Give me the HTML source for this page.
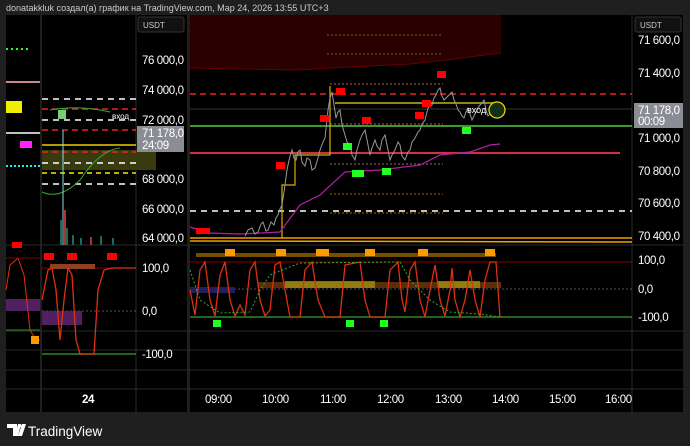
<!DOCTYPE html>
<html><head><meta charset="utf-8"><style>
*{margin:0;padding:0}
body{width:690px;height:446px;background:#1f1f1f;overflow:hidden;font-family:"Liberation Sans","Noto Sans CJK SC",sans-serif;position:relative}
.t{position:absolute;color:#ddd;white-space:nowrap}
</style></head><body>
<div class="t" style="left:6px;top:3px;font-size:9px;color:#ccc">donatakkluk создал(а) график на TradingView.com, Мар 24, 2026 13:55 UTC+3</div>
<svg width="690" height="446" style="position:absolute;left:0;top:0" font-family="Liberation Sans, sans-serif">
<rect x="6" y="15" width="34" height="397" fill="#000"/>
<rect x="42" y="15" width="145" height="397" fill="#000"/>
<rect x="190" y="15" width="493" height="397" fill="#000"/>
<g stroke="#2a2a2a" stroke-width="1">
<line x1="6" y1="245" x2="683" y2="245"/>
<line x1="6" y1="331" x2="683" y2="331"/>
<line x1="6" y1="350" x2="683" y2="350"/>
<line x1="6" y1="370" x2="683" y2="370"/>
<line x1="6" y1="389" x2="683" y2="389"/>
<line x1="136" y1="15" x2="136" y2="412"/>
<line x1="632" y1="15" x2="632" y2="412"/>
</g>
<path d="M190 15 H501 V53 L485 55 L447 60 L410 64 L350 67 L295 70 L190 68 Z" fill="#2a0000"/>
<path d="M190 68 L295 70 L350 67 L410 64 L447 60 L485 55 L501 53" stroke="#600" fill="none"/>
<line x1="327" y1="35" x2="443" y2="35" stroke="#6a6a20" stroke-dasharray="2,2"/>
<line x1="327" y1="54" x2="443" y2="54" stroke="#6a6a20" stroke-dasharray="2,2"/>
<line x1="190" y1="94" x2="632" y2="94" stroke="#e22" stroke-width="1.5" stroke-dasharray="6,4"/>
<line x1="190" y1="109" x2="632" y2="109" stroke="#333"/>
<line x1="335" y1="103" x2="500" y2="103" stroke="#8a8a10" stroke-width="2"/>
<line x1="190" y1="126" x2="632" y2="126" stroke="#3a9a30" stroke-width="2"/>
<line x1="190" y1="153" x2="620" y2="153" stroke="#d03040" stroke-width="2"/>
<line x1="190" y1="211" x2="632" y2="211" stroke="#fff" stroke-width="1.5" stroke-dasharray="6,5"/>
<line x1="330" y1="84" x2="443" y2="84" stroke="#a66" stroke-dasharray="2,2"/>
<line x1="330" y1="124" x2="443" y2="124" stroke="#a66" stroke-dasharray="2,2"/>
<line x1="330" y1="164" x2="443" y2="164" stroke="#a66" stroke-dasharray="2,2"/>
<line x1="330" y1="194" x2="443" y2="194" stroke="#a60" stroke-dasharray="2,2"/>
<line x1="330" y1="213" x2="443" y2="213" stroke="#a60" stroke-dasharray="2,2"/>
<path d="M190 238 H632 M190 241 L632 242" stroke="#f0a000" stroke-width="1.5"/>
<path d="M282 238 V185 H295 V155 H330 V86" stroke="#d8b000" fill="none" stroke-width="1.2"/>
<path d="M190 227 L210 233 L240 234 L280 232 L300 205 L320 195 L345 172 L380 170 L420 165 L440 155 L470 152 L490 145 L500 144" stroke="#b020a0" fill="none" stroke-width="1.2"/>
<polyline fill="none" stroke="#999" stroke-width="1" points="245,236 248,230 252,228 255,234 258,232 261,224 263,222 266,231 268,230 271,222 274,225 276,218 278,215 280,209 282,205 284,192 285,185 287,170 288,165 290,156 292,150 294,158 296,160 298,152 300,150 302,162 305,166 307,158 310,160 312,170 315,168 318,158 320,150 323,142 325,138 327,120 328,110 330,98 332,92 334,105 336,118 338,112 340,110 342,125 345,135 347,142 350,145 352,155 355,160 357,150 360,140 362,135 365,130 368,145 370,155 372,148 375,140 377,146 380,150 382,140 385,135 388,150 390,160 392,155 395,150 398,142 400,145 402,156 405,160 408,152 410,150 412,142 415,138 418,132 420,130 422,124 425,120 427,112 428,108 430,106 432,105 434,98 436,95 438,90 440,88 442,96 444,100 446,98 448,96 450,94 452,92 454,100 456,104 458,110 460,112 462,116 464,118 466,112 468,108 470,114 472,120 474,116 476,112 478,108 480,105 482,103 484,100 486,110 488,116 490,114 492,112 494,110 496,108"/>
<circle cx="497" cy="110" r="8" fill="#143014" stroke="#e8d800" stroke-width="1.3"/>
<text x="467" y="113" fill="#fff" font-size="9">вход</text>
<g fill="#f00">
<rect x="196" y="228" width="14" height="6"/><rect x="276" y="162" width="9" height="7"/><rect x="320" y="115" width="9" height="7"/><rect x="336" y="88" width="9" height="7"/><rect x="362" y="117" width="9" height="7"/><rect x="415" y="112" width="9" height="7"/><rect x="422" y="100" width="9" height="7"/><rect x="437" y="71" width="9" height="7"/>
</g>
<g fill="#2f2">
<rect x="343" y="143" width="9" height="7"/><rect x="352" y="170" width="12" height="7"/><rect x="382" y="168" width="9" height="7"/><rect x="462" y="127" width="9" height="7"/>
</g>
<line x1="190" y1="262" x2="632" y2="262" stroke="#800" />
<line x1="190" y1="289" x2="632" y2="289" stroke="#555" stroke-dasharray="2,2"/>
<line x1="190" y1="317" x2="632" y2="317" stroke="#2a8a20" stroke-width="1.5"/>
<rect x="258" y="282" width="243" height="6" fill="#804010" opacity=".7"/>
<rect x="285" y="281" width="90" height="7" fill="#a09010" opacity=".8"/>
<rect x="438" y="281" width="42" height="7" fill="#a09010" opacity=".8"/>
<rect x="190" y="287" width="45" height="6" fill="#202060"/>
<rect x="196" y="253" width="300" height="4" fill="#c08000" opacity=".6"/>
<polyline fill="none" stroke="#e03010" stroke-width="1.3" points="190,290 195,315 200,270 205,262 210,300 215,316 220,275 225,262 230,300 235,316 240,305 245,315 250,270 255,262 260,300 265,316 270,310 275,265 280,262 285,290 290,317 300,317 305,270 312,262 318,300 325,317 340,317 345,265 360,262 365,300 370,317 385,317 390,270 398,262 402,300 405,312 410,270 415,262 420,300 425,317 430,290 435,265 440,300 445,316 450,290 452,268 455,300 460,317 465,300 470,270 475,300 480,317 485,280 490,262 496,262 500,317"/>
<polyline fill="none" stroke="#3a3" stroke-dasharray="2,2" points="190,270 200,300 220,313 250,312 260,290 270,275 300,263 400,262 410,280 430,300 450,312 480,314 500,317"/>
<g fill="#f90"><rect x="225" y="249" width="10" height="7"/><rect x="276" y="249" width="10" height="7"/><rect x="316" y="249" width="13" height="7"/><rect x="365" y="249" width="10" height="7"/><rect x="418" y="249" width="10" height="7"/><rect x="485" y="249" width="10" height="7"/></g>
<g fill="#2f2"><rect x="213" y="320" width="8" height="7"/><rect x="346" y="320" width="8" height="7"/><rect x="380" y="320" width="8" height="7"/></g>
<rect x="42" y="150" width="114" height="20" fill="#3a3a10"/>
<g stroke="#fff" stroke-width="1.5" stroke-dasharray="6,5">
<line x1="42" y1="99" x2="136" y2="99"/><line x1="42" y1="120" x2="136" y2="120"/><line x1="42" y1="163" x2="136" y2="163"/><line x1="42" y1="184" x2="136" y2="184"/></g>
<g stroke="#e22" stroke-width="1.5" stroke-dasharray="6,4"><line x1="42" y1="109" x2="136" y2="109"/><line x1="42" y1="130" x2="136" y2="130"/><line x1="42" y1="152" x2="136" y2="152"/></g>
<line x1="42" y1="173" x2="136" y2="173" stroke="#ee0" stroke-width="1.5" stroke-dasharray="5,4"/>
<line x1="42" y1="145" x2="136" y2="145" stroke="#ec0" stroke-width="1.5"/>
<path d="M42 192 Q60 200 80 180 Q100 150 120 148" stroke="#3a3" fill="none"/>
<path d="M50 110 Q80 105 110 112" stroke="#3a3" fill="none"/>
<rect x="58" y="110" width="8" height="9" fill="#7c7"/>
<line x1="63" y1="130" x2="63" y2="245" stroke="#8dd"/>
<g fill="#1a6a5a"><rect x="60" y="220" width="2" height="25"/><rect x="66" y="228" width="2" height="17"/><rect x="72" y="235" width="2" height="10"/><rect x="80" y="238" width="2" height="7"/><rect x="100" y="236" width="2" height="9"/><rect x="112" y="238" width="2" height="7"/></g>
<g fill="#a33"><rect x="64" y="210" width="2" height="35"/><rect x="90" y="237" width="2" height="8"/></g>
<text x="112" y="119" fill="#fff" font-size="8">вход</text>
<line x1="42" y1="268" x2="136" y2="268" stroke="#800"/>
<line x1="42" y1="311" x2="136" y2="311" stroke="#555" stroke-dasharray="2,2"/>
<line x1="42" y1="354" x2="136" y2="354" stroke="#2a8a20" stroke-width="1.5"/>
<rect x="42" y="311" width="40" height="14" fill="#502060"/>
<rect x="50" y="264" width="45" height="5" fill="#904020"/>
<polyline fill="none" stroke="#e03010" stroke-width="1.3" points="42,300 48,270 52,268 56,290 60,340 64,300 68,268 72,275 76,340 80,354 94,354 98,290 104,270 112,268 136,268"/>
<g fill="#f00"><rect x="44" y="253" width="10" height="7"/><rect x="67" y="253" width="10" height="7"/><rect x="107" y="253" width="10" height="7"/></g>
<line x1="6" y1="82" x2="40" y2="82" stroke="#c88" stroke-width="2"/>
<line x1="6" y1="49" x2="30" y2="49" stroke="#2f2" stroke-dasharray="2,3" stroke-width="2"/>
<line x1="6" y1="166" x2="40" y2="166" stroke="#2ee" stroke-dasharray="2,2" stroke-width="2"/>
<rect x="6" y="101" width="16" height="12" fill="#ee0"/>
<line x1="6" y1="133" x2="40" y2="133" stroke="#fff" stroke-width="1.5"/>
<rect x="20" y="141" width="12" height="7" fill="#f2f"/>
<rect x="6" y="299" width="34" height="12" fill="#502060"/>
<polyline fill="none" stroke="#e03010" points="6,290 10,265 18,258 24,275 30,330 36,340 40,340"/>
<line x1="6" y1="258" x2="40" y2="258" stroke="#800"/>
<line x1="6" y1="330" x2="40" y2="330" stroke="#2a8a20"/>
<rect x="12" y="242" width="10" height="6" fill="#f00"/>
<rect x="31" y="336" width="8" height="8" fill="#f90"/>
<rect x="138" y="17" width="46" height="15" rx="2" fill="#111" stroke="#333"/>
<rect x="635" y="17" width="46" height="15" rx="2" fill="#111" stroke="#333"/>
<text x="143" y="28" fill="#ccc" font-size="8">USDT</text>
<text x="640" y="28" fill="#ccc" font-size="8">USDT</text>
<rect x="137" y="126" width="47" height="26" fill="#8a8d94"/>
<rect x="634" y="103" width="49" height="25" fill="#8a8d94"/>
<g fill="#fff" font-size="11.5" letter-spacing="-0.4">
<text x="142" y="64">76 000,0</text><text x="142" y="94">74 000,0</text><text x="142" y="124">72 000,0</text>
<text x="142" y="137">71 178,0</text><text x="142" y="149">24:09</text>
<text x="142" y="183">68 000,0</text><text x="142" y="213">66 000,0</text><text x="142" y="242">64 000,0</text>
<text x="142" y="272">100,0</text><text x="142" y="315">0,0</text><text x="142" y="358">-100,0</text>
<text x="638" y="44">71 600,0</text><text x="638" y="77">71 400,0</text>
<text x="638" y="114">71 178,0</text><text x="638" y="125">00:09</text>
<text x="638" y="142">71 000,0</text><text x="638" y="175">70 800,0</text><text x="638" y="207">70 600,0</text><text x="638" y="240">70 400,0</text>
<text x="638" y="264">100,0</text><text x="638" y="293">0,0</text><text x="638" y="321">-100,0</text>
<text x="82" y="403" font-weight="bold">24</text>
<text x="205" y="403">09:00</text><text x="262" y="403">10:00</text><text x="320" y="403">11:00</text><text x="377" y="403">12:00</text><text x="435" y="403">13:00</text><text x="492" y="403">14:00</text><text x="549" y="403">15:00</text><text x="605" y="403">16:00</text>
</g>
<rect x="683" y="15" width="7" height="397" fill="#1f1f1f"/>
<path d="M7 424 H17 V436 H13 V428 H7 Z M18 424 H21 L18 436 H15 Z M22 424 H26 L22 436 H18 Z" fill="#fff"/>
<circle cx="20" cy="426" r="1.5" fill="#fff"/>
<text x="28" y="436" fill="#fff" font-size="13.5">TradingView</text>
</svg>
</body></html>
